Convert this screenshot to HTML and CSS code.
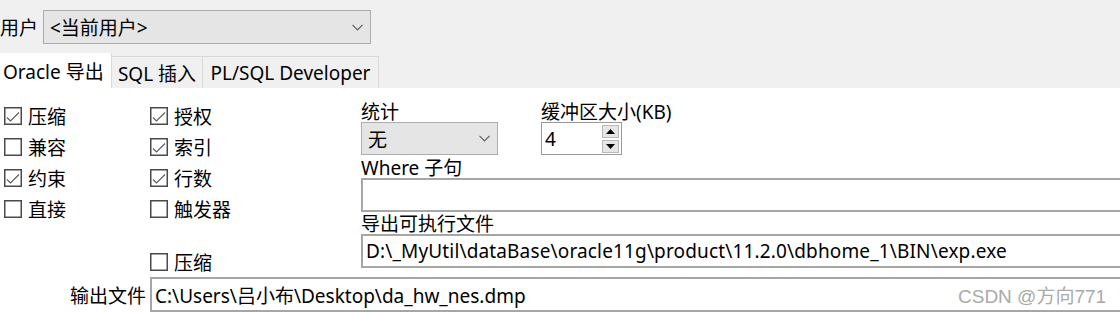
FILE: index.html
```html
<!DOCTYPE html>
<html lang="zh-CN">
<head>
<meta charset="utf-8">
<title>导出表</title>
<link rel="stylesheet" href="styles.css">
</head>
<body>
<div class="page">
  <div class="userbar">
    <span class="userlabel">用户</span>
    <div class="combo usercombo">
      <span>&lt;当前用户&gt;</span>
      <svg class="chev" width="11" height="7" viewBox="0 0 11 7"><polyline points="0.5,0.8 5.5,5.8 10.5,0.8" fill="none" stroke="#606060" stroke-width="1.2"/></svg>
    </div>
  </div>
  <div class="tabs">
    <div class="tab active t1">Oracle 导出</div>
    <div class="tab t2">SQL 插入</div>
    <div class="tab t3">PL/SQL Developer</div>
  </div>
  <div class="panel">
    <div class="content">
      <div class="col col1">
        <label class="cb"><svg class="box" width="18" height="18" viewBox="0 0 18 18"><rect x="0.75" y="0.75" width="16.5" height="16.5" fill="#fff" stroke="#4a4a4a" stroke-width="1.5"/><polyline points="3,10.5 6.5,14 15,5.5" fill="none" stroke="#5a5a5a" stroke-width="1.1"/></svg><span>压缩</span></label>
        <label class="cb"><svg class="box" width="18" height="18" viewBox="0 0 18 18"><rect x="0.75" y="0.75" width="16.5" height="16.5" fill="#fff" stroke="#4a4a4a" stroke-width="1.5"/></svg><span>兼容</span></label>
        <label class="cb"><svg class="box" width="18" height="18" viewBox="0 0 18 18"><rect x="0.75" y="0.75" width="16.5" height="16.5" fill="#fff" stroke="#4a4a4a" stroke-width="1.5"/><polyline points="3,10.5 6.5,14 15,5.5" fill="none" stroke="#5a5a5a" stroke-width="1.1"/></svg><span>约束</span></label>
        <label class="cb"><svg class="box" width="18" height="18" viewBox="0 0 18 18"><rect x="0.75" y="0.75" width="16.5" height="16.5" fill="#fff" stroke="#4a4a4a" stroke-width="1.5"/></svg><span>直接</span></label>
      </div>
      <div class="col col2">
        <label class="cb"><svg class="box" width="18" height="18" viewBox="0 0 18 18"><rect x="0.75" y="0.75" width="16.5" height="16.5" fill="#fff" stroke="#4a4a4a" stroke-width="1.5"/><polyline points="3,10.5 6.5,14 15,5.5" fill="none" stroke="#5a5a5a" stroke-width="1.1"/></svg><span>授权</span></label>
        <label class="cb"><svg class="box" width="18" height="18" viewBox="0 0 18 18"><rect x="0.75" y="0.75" width="16.5" height="16.5" fill="#fff" stroke="#4a4a4a" stroke-width="1.5"/><polyline points="3,10.5 6.5,14 15,5.5" fill="none" stroke="#5a5a5a" stroke-width="1.1"/></svg><span>索引</span></label>
        <label class="cb"><svg class="box" width="18" height="18" viewBox="0 0 18 18"><rect x="0.75" y="0.75" width="16.5" height="16.5" fill="#fff" stroke="#4a4a4a" stroke-width="1.5"/><polyline points="3,10.5 6.5,14 15,5.5" fill="none" stroke="#5a5a5a" stroke-width="1.1"/></svg><span>行数</span></label>
        <label class="cb"><svg class="box" width="18" height="18" viewBox="0 0 18 18"><rect x="0.75" y="0.75" width="16.5" height="16.5" fill="#fff" stroke="#4a4a4a" stroke-width="1.5"/></svg><span>触发器</span></label>
        <label class="cb lone"><svg class="box" width="18" height="18" viewBox="0 0 18 18"><rect x="0.75" y="0.75" width="16.5" height="16.5" fill="#fff" stroke="#4a4a4a" stroke-width="1.5"/></svg><span>压缩</span></label>
      </div>
      <div class="right">
        <div class="toprow">
          <div class="group stats">
            <div class="lbl">统计</div>
            <div class="combo statcombo">
              <span>无</span>
              <svg class="chev" width="11" height="7" viewBox="0 0 11 7"><polyline points="0.5,0.8 5.5,5.8 10.5,0.8" fill="none" stroke="#606060" stroke-width="1.2"/></svg>
            </div>
          </div>
          <div class="group buffer">
            <div class="lbl">缓冲区大小(KB)</div>
            <div class="spin">
              <span class="spinval">4</span>
              <div class="spinbtns">
                <div class="sbtn"><svg width="9" height="5" viewBox="0 0 9 5"><polygon points="0,5 4.5,0 9,5" fill="#000"/></svg></div>
                <div class="sbtn"><svg width="9" height="5" viewBox="0 0 9 5"><polygon points="0,0 4.5,5 9,0" fill="#000"/></svg></div>
              </div>
            </div>
          </div>
        </div>
        <div class="lbl where">Where 子句</div>
        <div class="textbox"></div>
        <div class="lbl exe">导出可执行文件</div>
        <div class="textbox exebox">D:\_MyUtil\dataBase\oracle11g\product\11.2.0\dbhome_1\BIN\exp.exe</div>
      </div>
    </div>
    <div class="outrow">
      <span class="outlabel">输出文件</span>
      <div class="textbox outbox">C:\Users\吕小布\Desktop\da_hw_nes.dmp</div>
    </div>
    <div class="watermark">CSDN @方向771</div>
  </div>
</div>
</body>
</html>
```

FILE: styles.css
```css
html, body {
  margin: 0;
  padding: 0;
}
body {
  background: #f0f0f0;
  font-family: "Noto Sans", "Noto Sans CJK SC", sans-serif;
  font-size: 19px;
  color: #000;
}
.page {
  width: 1120px;
  height: 312px;
  overflow: hidden;
}
.userbar {
  display: flex;
  align-items: center;
  height: 34px;
  margin-top: 10px;
}
.userlabel {
  flex: none;
  width: 43px;
  white-space: nowrap;
}
.combo {
  box-sizing: border-box;
  display: flex;
  align-items: center;
  justify-content: space-between;
  background: #e5e5e5;
  border: 1px solid #adadad;
  padding: 0 7px 0 6px;
  white-space: nowrap;
}
.usercombo {
  width: 328px;
  height: 34px;
}
.tabs {
  display: flex;
  align-items: flex-end;
  height: 35px;
  margin-top: 9px;
}
.tab {
  box-sizing: border-box;
  display: flex;
  align-items: center;
  justify-content: center;
  white-space: nowrap;
  height: 32px;
  background: #f0f0f0;
  border: 1px solid #d9d9d9;
  border-left: none;
  border-bottom: none;
}
.tab.active {
  height: 35px;
  background: #fff;
  border-top: none;
}
.t1 { width: 112px; justify-content: flex-start; padding-left: 3px; }
.t2 { width: 91px; }
.t3 { width: 176px; }
.panel {
  position: relative;
  background: #fff;
  height: 224px;
}
.content {
  display: flex;
  height: 189px;
}
.col {
  box-sizing: border-box;
  flex: none;
  display: flex;
  flex-direction: column;
  padding-top: 12px;
}
.col1 {
  width: 150px;
  padding-left: 4px;
}
.col2 {
  width: 211px;
}
.cb {
  display: flex;
  align-items: center;
  gap: 6px;
  height: 31px;
  white-space: nowrap;
}
.cb .box {
  flex: none;
}
.cb.lone {
  margin-top: 23px;
  height: 30px;
}
.right {
  box-sizing: border-box;
  flex: none;
  width: 800px;
  padding-top: 14px;
}
.toprow {
  display: flex;
  gap: 43px;
}
.lbl {
  height: 20px;
  line-height: 20px;
  white-space: nowrap;
}
.statcombo {
  width: 137px;
  height: 33px;
}
.spin {
  box-sizing: border-box;
  display: flex;
  align-items: center;
  justify-content: space-between;
  width: 81px;
  height: 33px;
  border: 1px solid #9a9a9a;
  background: #fff;
  padding: 0 2px 0 3px;
}
.spinbtns {
  display: flex;
  flex-direction: column;
  gap: 2px;
}
.sbtn {
  box-sizing: border-box;
  width: 17px;
  height: 13px;
  background: #e6e6e6;
  border: 1px solid #b8b8b8;
  display: flex;
  align-items: center;
  justify-content: center;
}
.where {
  margin-top: 3px;
}
.exe {
  margin-top: 2px;
}
.textbox {
  box-sizing: border-box;
  height: 34px;
  width: 800px;
  border: 2px solid #a6a6a6;
  background: #fff;
  padding: 0 3px;
  display: flex;
  align-items: center;
  white-space: nowrap;
}
.exebox {
  letter-spacing: 0.15px;
}
.outrow {
  display: flex;
  align-items: center;
  height: 35px;
}
.outlabel {
  box-sizing: border-box;
  flex: none;
  width: 150px;
  text-align: right;
  padding-right: 4px;
  white-space: nowrap;
}
.outbox {
  flex: none;
  width: 1000px;
  height: 35px;
}
.watermark {
  position: absolute;
  left: 958px;
  top: 193px;
  color: #aaaaaa;
  font-family: "Liberation Sans", "Noto Sans CJK SC", sans-serif;
  font-size: 19px;
  white-space: nowrap;
}
```
